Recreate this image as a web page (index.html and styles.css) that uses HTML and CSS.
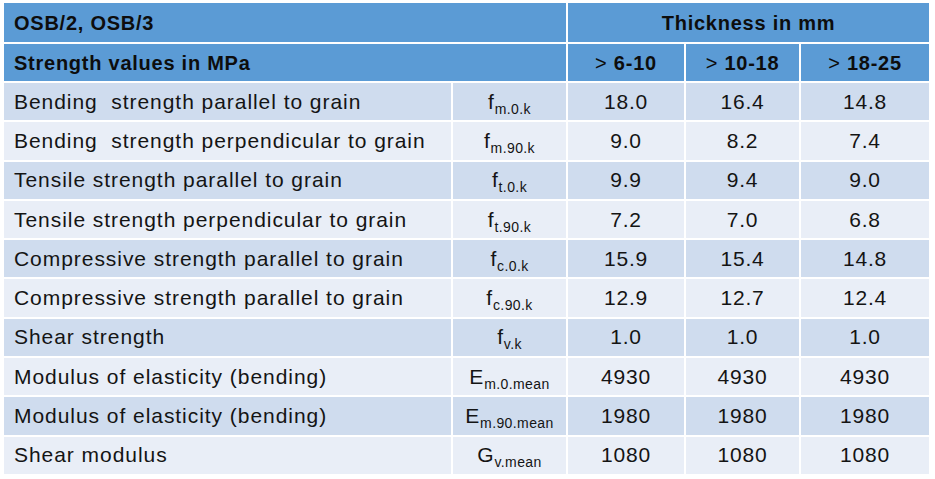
FILE: index.html
```html
<!DOCTYPE html>
<html lang="en">
<head>
<meta charset="utf-8">
<title>OSB strength values</title>
<link rel="stylesheet" href="styles.css">
</head>
<body>
<table class="osb">
  <colgroup>
    <col class="c-label"><col class="c-sym"><col class="c-a"><col class="c-b"><col class="c-c">
  </colgroup>
  <thead>
    <tr class="hrow hrow1">
      <th colspan="2" class="left">OSB/2, OSB/3</th>
      <th colspan="3">Thickness in mm</th>
    </tr>
    <tr class="hrow hrow2">
      <th colspan="2" class="left">Strength values in MPa</th>
      <th><span class="gt">&gt;</span> 6-10</th>
      <th><span class="gt">&gt;</span> 10-18</th>
      <th><span class="gt">&gt;</span> 18-25</th>
    </tr>
  </thead>
  <tbody>
    <tr class="odd"><td class="label">Bending&nbsp; strength parallel to grain</td><td class="sym">f<sub>m.0.k</sub></td><td>18.0</td><td>16.4</td><td>14.8</td></tr>
    <tr class="even"><td class="label">Bending&nbsp; strength perpendicular to grain</td><td class="sym">f<sub>m.90.k</sub></td><td>9.0</td><td>8.2</td><td>7.4</td></tr>
    <tr class="odd"><td class="label">Tensile strength parallel to grain</td><td class="sym">f<sub>t.0.k</sub></td><td>9.9</td><td>9.4</td><td>9.0</td></tr>
    <tr class="even"><td class="label">Tensile strength perpendicular to grain</td><td class="sym">f<sub>t.90.k</sub></td><td>7.2</td><td>7.0</td><td>6.8</td></tr>
    <tr class="odd"><td class="label">Compressive strength parallel to grain</td><td class="sym">f<sub>c.0.k</sub></td><td>15.9</td><td>15.4</td><td>14.8</td></tr>
    <tr class="even"><td class="label">Compressive strength parallel to grain</td><td class="sym">f<sub>c.90.k</sub></td><td>12.9</td><td>12.7</td><td>12.4</td></tr>
    <tr class="odd"><td class="label">Shear strength</td><td class="sym">f<sub>v.k</sub></td><td>1.0</td><td>1.0</td><td>1.0</td></tr>
    <tr class="even"><td class="label">Modulus of elasticity (bending)</td><td class="sym">E<sub>m.0.mean</sub></td><td>4930</td><td>4930</td><td>4930</td></tr>
    <tr class="odd"><td class="label">Modulus of elasticity (bending)</td><td class="sym">E<sub>m.90.mean</sub></td><td>1980</td><td>1980</td><td>1980</td></tr>
    <tr class="even"><td class="label">Shear modulus</td><td class="sym">G<sub>v.mean</sub></td><td>1080</td><td>1080</td><td>1080</td></tr>
  </tbody>
</table>
</body>
</html>
```

FILE: styles.css
```css
html, body {
  margin: 0;
  padding: 0;
  background: #ffffff;
}

body {
  font-family: "Liberation Sans", Arial, sans-serif;
  color: #141414;
}

.osb {
  border-collapse: separate;
  border-spacing: 2px;
  margin: 1px 0 0 2px;
  table-layout: fixed;
  width: 929px;
  font-size: 21px;
  letter-spacing: 0.8px;
}

.c-label { width: 447px; }
.c-sym { width: 113px; }
.c-a { width: 116px; }
.c-b { width: 113px; }
.c-c { width: 128px; }

.osb th,
.osb td {
  padding: 0;
  text-align: center;
  vertical-align: middle;
  line-height: 22px;
  white-space: nowrap;
}

.hrow th {
  background: #5b9bd5;
  font-weight: bold;
  font-size: 20px;
  letter-spacing: 0.75px;
  color: #0d0d0d;
}

.hrow1 { height: 39px; }
.hrow2 { height: 37px; }

.osb th.left,
.osb td.label {
  text-align: left;
  padding-left: 10px;
}

.osb td.label {
  letter-spacing: 0.95px;
}

.gt {
  font-weight: normal;
}

tbody tr { height: 37.3px; }

.odd td { background: #cfdcee; }
.even td { background: #e9eef7; }

.sym sub {
  font-size: 14px;
  letter-spacing: 0.4px;
  vertical-align: -5px;
  line-height: 0;
}
```
